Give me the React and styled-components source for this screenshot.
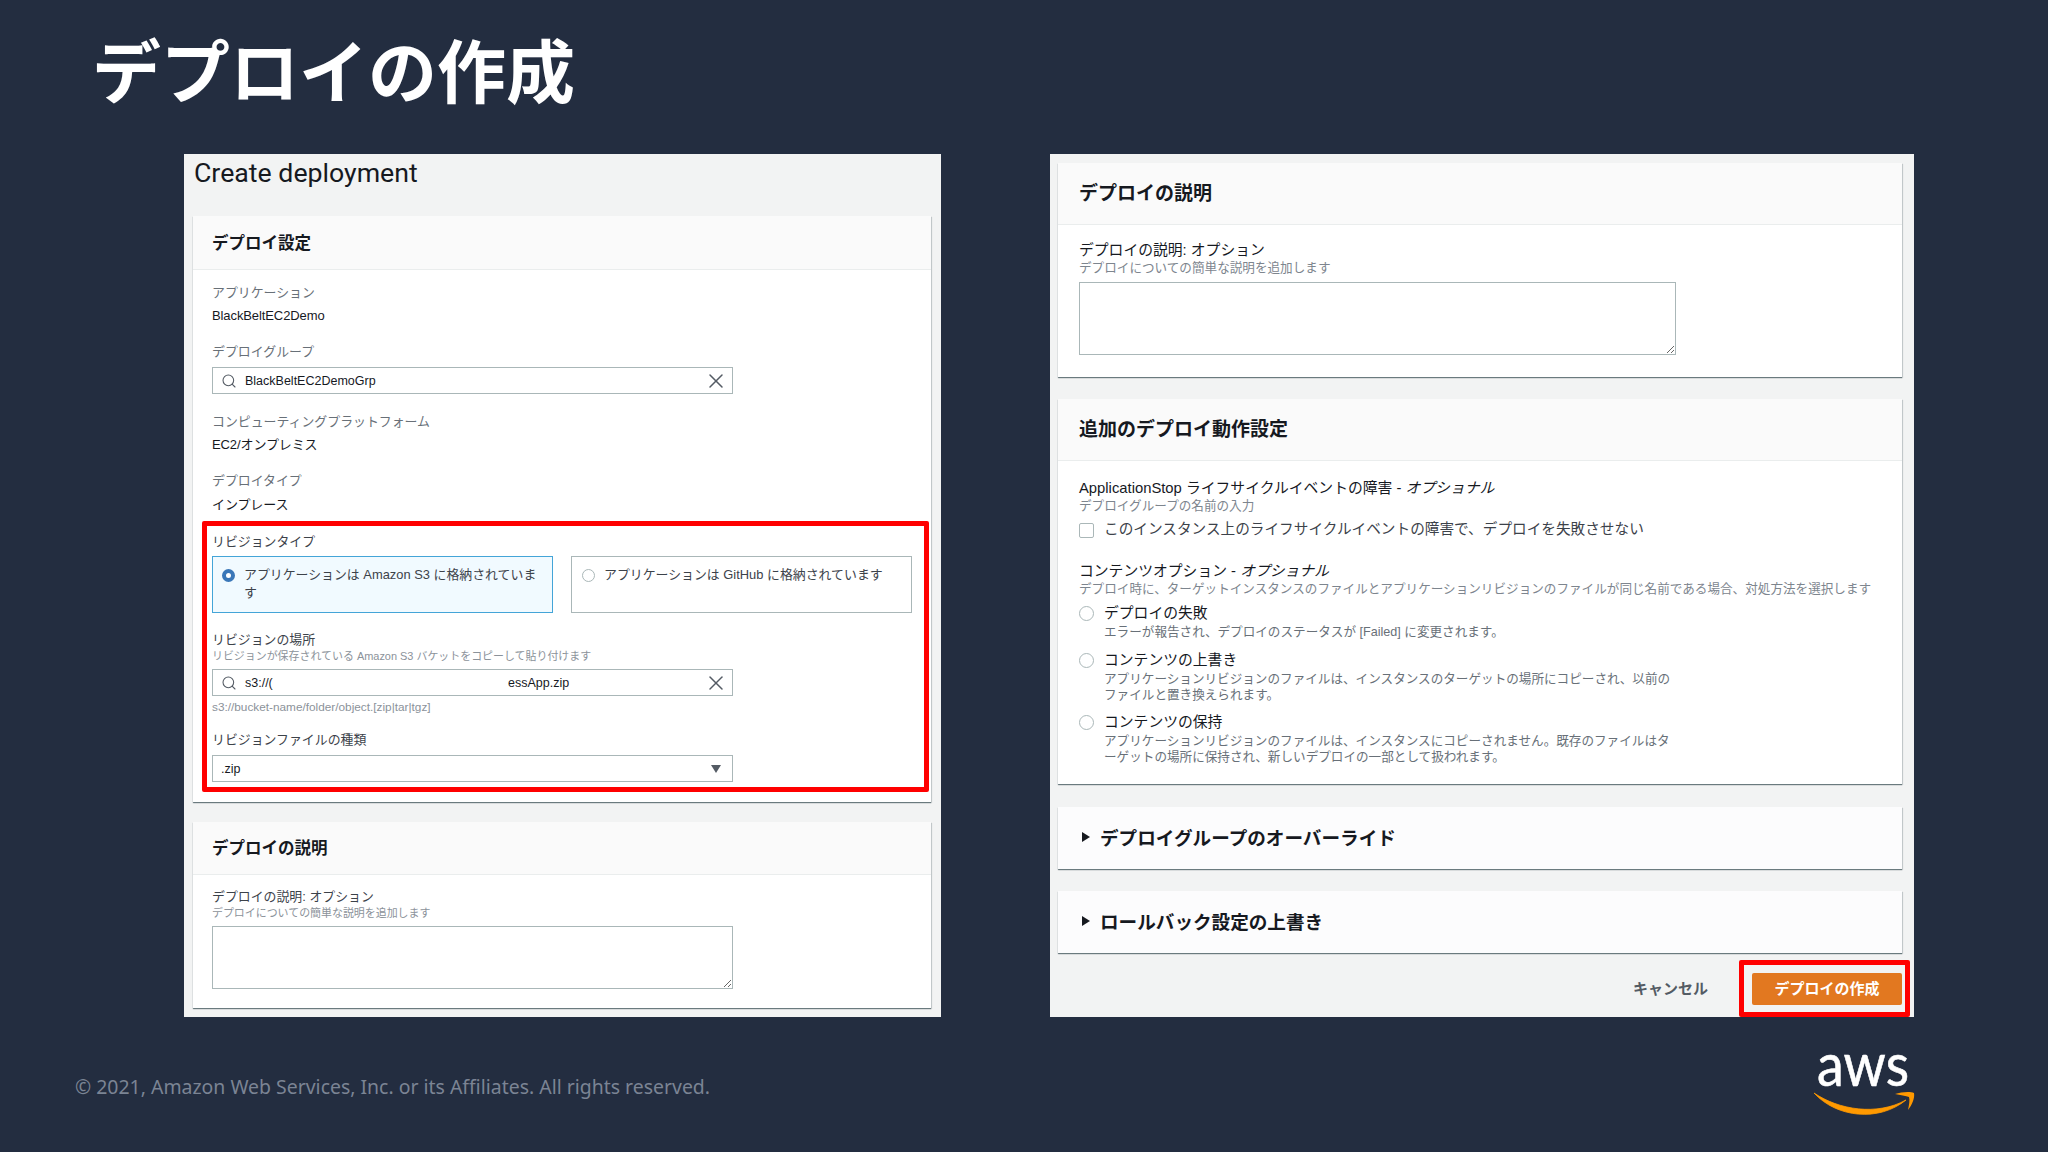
import React from 'react'
import styled, { createGlobalStyle } from 'styled-components'
import { Search, X } from 'lucide-react'

const sans = '"Liberation Sans", "Noto Sans CJK JP", sans-serif'

const GlobalStyle = createGlobalStyle`
  html, body { margin: 0; padding: 0; background: #232d40; }
  * { box-sizing: border-box; }
`

const Slide = styled.div`
  width: 2048px;
  height: 1152px;
  background: #232d40;
  overflow: hidden;
  font-family: ${sans};
  color: #16191f;
`
const SlideTitle = styled.h1`
  margin: 0;
  height: 154px;
  padding-left: 92px;
  font: 700 69px/136px "Noto Sans CJK JP", sans-serif;
  color: #fff;
`
const Columns = styled.div`
  display: flex;
  gap: 109px;
  padding-left: 184px;
  height: 863px;
`
const LeftPanel = styled.section`
  width: 757px;
  background: #f2f3f3;
  padding: 0 10px 0 9px;
`
const RightPanel = styled.section`
  width: 864px;
  background: #f2f3f3;
  padding: 9px 12px 0 8px;
`
const PageTitle = styled.h2`
  margin: 0;
  height: 62px;
  padding-left: 1px;
  font: 400 26.7px/39px Roboto, sans-serif;
`
const Card = styled.div`
  background: #fff;
  margin-bottom: ${p => p.$gap || 0}px;
  box-shadow: 0 1px 1px 0 rgba(0, 28, 36, 0.5), 1px 1px 1px 0 rgba(0, 28, 36, 0.12);
`
const CardHead = styled.div`
  display: flex;
  align-items: center;
  height: ${p => p.$h}px;
  padding: 0 0 2px 19px;
  background: #fafafa;
  border-bottom: 1px solid #eaeded;
  font-weight: 700;
  font-size: 16.5px;
`
const BigHead = styled(CardHead)`
  padding: 0 0 4px 21px;
  font-size: 19px;
`
const Body = styled.div`
  padding: ${p => p.$top}px 0 ${p => p.$bottom}px 19px;
`
const BigBody = styled(Body)`
  padding-left: 21px;
`
const Caption = styled.div`
  font-size: 12.9px;
  line-height: 18px;
  color: ${p => (p.$strong ? '#3c424a' : '#687078')};
  margin-top: ${p => p.$top || 0}px;
`
const Value = styled.div`
  font-size: 13px;
  line-height: 18px;
  letter-spacing: -0.1px;
  margin-top: ${p => p.$top || 5}px;
`
const Hint = styled.div`
  font-size: ${p => p.$size || 10.95}px;
  line-height: 14px;
  color: #8b929a;
  margin-top: ${p => p.$top || 0}px;
`
const Field = styled.div`
  margin-bottom: ${p => p.$gap ?? 18}px;
`
const InputBox = styled.div`
  display: flex;
  align-items: center;
  width: 521px;
  height: 27px;
  margin-top: ${p => p.$top || 6}px;
  padding: 0 4px 0 8px;
  border: 1px solid #aab7b8;
  background: #fff;
  font-size: 12.5px;
  color: #16191f;
  svg { flex: none; }
`
const InputText = styled.span`
  margin-left: 8px;
  flex: 1;
`
const PathHead = styled.span`
  width: 31px;
  margin-left: 8px;
  flex: none;
`
const PathTail = styled.span`
  margin-left: 232px;
  flex: 1;
`
const SelectText = styled.span`
  flex: 1;
`
const SelectArrow = styled.i`
  width: 0;
  height: 0;
  margin-right: 7px;
  border-left: 5px solid transparent;
  border-right: 5px solid transparent;
  border-top: 8px solid #545b64;
`
const Highlight = styled.div`
  width: 727px;
  margin: 7px 0 0 -10px;
  padding: 7px 0 5px 5px;
  border: 5px solid #f00;
  border-radius: 2px;
`
const Tiles = styled.div`
  display: flex;
  gap: 18px;
  margin-top: 5px;
`
const Tile = styled.div`
  display: flex;
  gap: 9px;
  width: 341px;
  height: 57px;
  padding: 9px 15px 0 ${p => (p.$active ? 9 : 10)}px;
  border: 1px solid ${p => (p.$active ? '#44a5d8' : '#aab7b8')};
  background: ${p => (p.$active ? '#f1faff' : '#fff')};
  font-size: 12.9px;
  line-height: 18px;
  color: #3c424a;
`
const Radio = styled.span`
  flex: none;
  width: ${p => p.$size || 13}px;
  height: ${p => p.$size || 13}px;
  margin-top: ${p => p.$top || 3}px;
  border-radius: 50%;
  background: #fff;
  border: ${p => (p.$on ? '4px solid #3a77b8' : '1px solid #aab7b8')};
`
const TextArea = styled.textarea`
  display: block;
  width: ${p => p.$w}px;
  height: ${p => p.$h}px;
  margin: 6px 0 0;
  border: 1px solid #aab7b8;
  border-radius: 0;
  outline: none;
  background: #fff;
  resize: vertical;
`
const BigCaption = styled.div`
  font-size: 14.8px;
  line-height: 20px;
  color: #16191f;
  margin-top: ${p => p.$top || 0}px;
  em { font-style: italic; }
`
const BigHint = styled.div`
  font-size: 12.6px;
  line-height: 16px;
  color: #7d858e;
`
const CheckRow = styled.label`
  display: flex;
  align-items: center;
  gap: 10px;
  margin-top: 5px;
  font-size: 14.65px;
  line-height: 20px;
  color: #3c424a;
`
const CheckBox = styled.span`
  width: 15px;
  height: 15px;
  margin-top: 3px;
  border: 1px solid #aab7b8;
  border-radius: 2px;
  background: #fff;
`
const Option = styled.div`
  display: flex;
  gap: 10px;
  margin-top: ${p => p.$top}px;
`
const OptionTitle = styled.div`
  font-size: 14.8px;
  line-height: 20px;
`
const OptionText = styled.div`
  font-size: 12.6px;
  line-height: 16px;
  color: #687078;
  margin-top: 1px;
`
const Expander = styled(BigHead)`
  gap: 10px;
  height: 62px;
  padding: 0 0 4px 24px;
  background: #fcfcfd;
  border-bottom: 0;
  font-size: 18.6px;
`
const Caret = styled.i`
  width: 0;
  height: 0;
  margin-top: 1px;
  border-top: 5.5px solid transparent;
  border-bottom: 5.5px solid transparent;
  border-left: 8px solid #16191f;
`
const Actions = styled.div`
  display: flex;
  justify-content: flex-end;
  margin-right: -8px;
  padding-top: 7px;
`
const Cancel = styled.span`
  margin: 17px 31px 0 0;
  font-size: 15px;
  line-height: 24px;
  font-weight: 700;
  color: #545b64;
`
const ButtonMark = styled.div`
  width: 171px;
  height: 57px;
  padding: 8px 3px 0 8px;
  border: 5px solid #f00;
  border-radius: 2px;
`
const PrimaryButton = styled.button`
  display: block;
  width: 150px;
  height: 32px;
  padding: 0;
  border: 0;
  border-radius: 2px;
  background: #e27820;
  color: #fff;
  font: 700 15px/32px ${sans};
`
const Footer = styled.footer`
  display: flex;
  justify-content: space-between;
  padding: 33px 133px 0 75px;
`
const Copyright = styled.div`
  margin-top: 25px;
  font: 400 19.45px/24px "Noto Sans", sans-serif;
  color: #7b8494;
`

function AwsLogo() {
  return (
    <svg width="102" height="68" viewBox="0 0 102 68">
      <text x="4" y="35.5" textLength="92" lengthAdjust="spacingAndGlyphs" fill="#fff" stroke="#fff" strokeWidth="0.6" fontFamily="Lato, sans-serif" fontSize="60">aws</text>
      <path d="M1 43 C26 60 64 66 93 50 C66 72 24 68 1 43 Z" fill="#f90" stroke="#f90" strokeWidth="0.8" strokeLinejoin="round" />
      <path d="M82 44 C88 42 97 41 101 43 C102 48 99 55 95 60 C96 55 97 50 96 47 C93 46 87 45 82 44 Z" fill="#f90" />
    </svg>
  )
}

function SearchField({ children }) {
  return (
    <InputBox>
      <Search size={16} strokeWidth={1.6} color="#545b64" />
      {children}
      <X size={24} strokeWidth={1.5} color="#545b64" />
    </InputBox>
  )
}

export default function App() {
  return (
    <Slide>
      <GlobalStyle />
      <SlideTitle>デプロイの作成</SlideTitle>
      <Columns>
        <LeftPanel>
          <PageTitle>Create deployment</PageTitle>
          <Card $gap={20}>
            <CardHead $h={54}>デプロイ設定</CardHead>
            <Body $top={14} $bottom={10}>
              <Field>
                <Caption>アプリケーション</Caption>
                <Value>BlackBeltEC2Demo</Value>
              </Field>
              <Field $gap={19}>
                <Caption>デプロイグループ</Caption>
                <SearchField><InputText>BlackBeltEC2DemoGrp</InputText></SearchField>
              </Field>
              <Field>
                <Caption>コンピューティングプラットフォーム</Caption>
                <Value>EC2/オンプレミス</Value>
              </Field>
              <Field $gap={0}>
                <Caption>デプロイタイプ</Caption>
                <Value $top={6}>インプレース</Value>
              </Field>
              <Highlight>
                <Caption $strong>リビジョンタイプ</Caption>
                <Tiles>
                  <Tile $active>
                    <Radio $on />
                    <span>アプリケーションは Amazon S3 に格納されています</span>
                  </Tile>
                  <Tile>
                    <Radio />
                    <span>アプリケーションは GitHub に格納されています</span>
                  </Tile>
                </Tiles>
                <Caption $strong $top={18}>リビジョンの場所</Caption>
                <Hint>リビジョンが保存されている Amazon S3 バケットをコピーして貼り付けます</Hint>
                <SearchField>
                  <PathHead>s3://(</PathHead>
                  <PathTail>essApp.zip</PathTail>
                </SearchField>
                <Hint $top={4} $size={11.8}>s3://bucket-name/folder/object.[zip|tar|tgz]</Hint>
                <Caption $strong $top={17}>リビジョンファイルの種類</Caption>
                <InputBox>
                  <SelectText>.zip</SelectText>
                  <SelectArrow />
                </InputBox>
              </Highlight>
            </Body>
          </Card>
          <Card>
            <CardHead $h={53}>デプロイの説明</CardHead>
            <Body $top={13} $bottom={19}>
              <Caption $strong>デプロイの説明: オプション</Caption>
              <Hint>デプロイについての簡単な説明を追加します</Hint>
              <TextArea $w={521} $h={63} readOnly />
            </Body>
          </Card>
        </LeftPanel>
        <RightPanel>
          <Card $gap={22}>
            <BigHead $h={62}>デプロイの説明</BigHead>
            <BigBody $top={15} $bottom={22}>
              <BigCaption>デプロイの説明: オプション</BigCaption>
              <BigHint>デプロイについての簡単な説明を追加します</BigHint>
              <TextArea $w={597} $h={73} readOnly />
            </BigBody>
          </Card>
          <Card $gap={23}>
            <BigHead $h={62}>追加のデプロイ動作設定</BigHead>
            <BigBody $top={17} $bottom={19}>
              <BigCaption>ApplicationStop ライフサイクルイベントの障害 - <em>オプショナル</em></BigCaption>
              <BigHint>デプロイグループの名前の入力</BigHint>
              <CheckRow>
                <CheckBox />
                このインスタンス上のライフサイクルイベントの障害で、デプロイを失敗させない
              </CheckRow>
              <BigCaption $top={22}>コンテンツオプション - <em>オプショナル</em></BigCaption>
              <BigHint>デプロイ時に、ターゲットインスタンスのファイルとアプリケーションリビジョンのファイルが同じ名前である場合、対処方法を選択します</BigHint>
              <Option $top={6}>
                <Radio $size={15} />
                <div>
                  <OptionTitle>デプロイの失敗</OptionTitle>
                  <OptionText>エラーが報告され、デプロイのステータスが [Failed] に変更されます。</OptionText>
                </div>
              </Option>
              <Option $top={10}>
                <Radio $size={15} />
                <div>
                  <OptionTitle>コンテンツの上書き</OptionTitle>
                  <OptionText>アプリケーションリビジョンのファイルは、インスタンスのターゲットの場所にコピーされ、以前の<br />ファイルと置き換えられます。</OptionText>
                </div>
              </Option>
              <Option $top={9}>
                <Radio $size={15} />
                <div>
                  <OptionTitle>コンテンツの保持</OptionTitle>
                  <OptionText>アプリケーションリビジョンのファイルは、インスタンスにコピーされません。既存のファイルはタ<br />ーゲットの場所に保持され、新しいデプロイの一部として扱われます。</OptionText>
                </div>
              </Option>
            </BigBody>
          </Card>
          <Card $gap={22}>
            <Expander><Caret />デプロイグループのオーバーライド</Expander>
          </Card>
          <Card>
            <Expander><Caret />ロールバック設定の上書き</Expander>
          </Card>
          <Actions>
            <Cancel>キャンセル</Cancel>
            <ButtonMark>
              <PrimaryButton>デプロイの作成</PrimaryButton>
            </ButtonMark>
          </Actions>
        </RightPanel>
      </Columns>
      <Footer>
        <Copyright>© 2021, Amazon Web Services, Inc. or its Affiliates. All rights reserved.</Copyright>
        <AwsLogo />
      </Footer>
    </Slide>
  )
}
